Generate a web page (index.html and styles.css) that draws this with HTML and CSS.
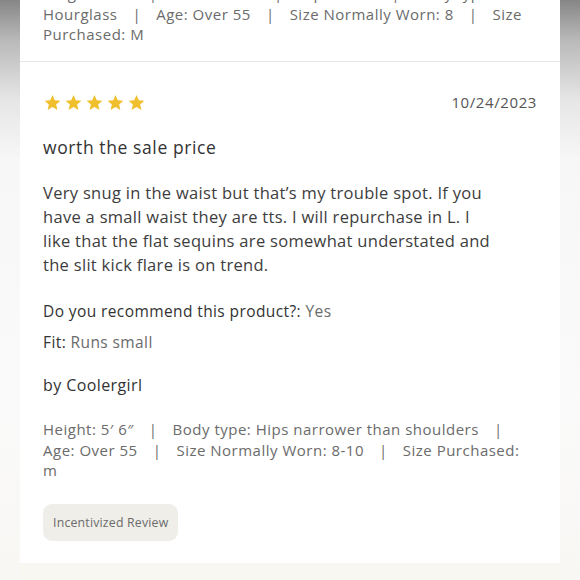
FILE: index.html
```html
<!DOCTYPE html>
<html>
<head>
<meta charset="utf-8">
<link rel="stylesheet" href="styles.css">
</head>
<body>
<div class="page">
  <div class="card">
    <div class="prev">
      <p class="meta meta-prev">Height: 5′ 5″<span class="sep">|</span>Waist: 30 in<span class="sep">|</span>Hips: 40 in<span class="sep">|</span>Body type:<br>Hourglass<span class="sep">|</span>Age: Over 55<span class="sep">|</span>Size Normally Worn: 8<span class="sep">|</span>Size<br>Purchased: M</p>
    </div>
    <div class="review">
      <div class="head">
        <div class="stars">
          <svg viewBox="0 0 24 24" class="star"><path d="M12 2.5l2.9 6.6 7.1.6-5.4 4.7 1.6 7-6.2-3.7-6.2 3.7 1.6-7L2 9.7l7.1-.6z"/></svg>
          <svg viewBox="0 0 24 24" class="star"><path d="M12 2.5l2.9 6.6 7.1.6-5.4 4.7 1.6 7-6.2-3.7-6.2 3.7 1.6-7L2 9.7l7.1-.6z"/></svg>
          <svg viewBox="0 0 24 24" class="star"><path d="M12 2.5l2.9 6.6 7.1.6-5.4 4.7 1.6 7-6.2-3.7-6.2 3.7 1.6-7L2 9.7l7.1-.6z"/></svg>
          <svg viewBox="0 0 24 24" class="star"><path d="M12 2.5l2.9 6.6 7.1.6-5.4 4.7 1.6 7-6.2-3.7-6.2 3.7 1.6-7L2 9.7l7.1-.6z"/></svg>
          <svg viewBox="0 0 24 24" class="star"><path d="M12 2.5l2.9 6.6 7.1.6-5.4 4.7 1.6 7-6.2-3.7-6.2 3.7 1.6-7L2 9.7l7.1-.6z"/></svg>
        </div>
        <div class="date">10/24/2023</div>
      </div>
      <h3 class="title">worth the sale price</h3>
      <p class="body">Very snug in the waist but that’s my trouble spot. If you<br>have a small waist they are tts. I will repurchase in L. I<br>like that the flat sequins are somewhat understated and<br>the slit kick flare is on trend.</p>
      <p class="qa qa-first"><span class="label">Do you recommend this product?:</span> <span class="value">Yes</span></p>
      <p class="qa qa-second"><span class="label">Fit:</span> <span class="value">Runs small</span></p>
      <p class="author">by Coolergirl</p>
      <p class="meta">Height: 5′ 6″<span class="sep">|</span>Body type: Hips narrower than shoulders<span class="sep">|</span><br>Age: Over 55<span class="sep">|</span>Size Normally Worn: 8-10<span class="sep">|</span>Size Purchased:<br>m</p>
      <div class="badge">Incentivized Review</div>
    </div>
  </div>
  <div class="footer"></div>
</div>
</body>
</html>
```

FILE: styles.css
```css
html, body {
  margin: 0;
  padding: 0;
}
body {
  width: 580px;
  height: 580px;
  overflow: hidden;
  background: linear-gradient(to bottom, #868686 0px, #b9b9b9 40px, #e6e6e6 100px, #f7f7f7 160px, #fafafa 400px, #f8f7f4 580px);
  font-family: "Open Sans", "Lato", sans-serif;
  color: #3a3a3a;
}
.page {
  padding: 0 20px;
}
.card {
  background: #ffffff;
}
p, h3 {
  margin: 0;
}
.prev {
  padding: 0 23px 16px;
  border-bottom: 1px solid #e6e6e6;
  height: 45px;
  overflow: hidden;
}
.meta {
  font-size: 15px;
  line-height: 20.5px;
  color: #6b6b6b;
  letter-spacing: 0.5px;
  white-space: nowrap;
}
.meta-prev {
  margin-top: -17px;
}
.sep {
  margin: 0 15px;
}
.review {
  padding: 29px 23px 22px;
}
.head {
  display: flex;
  justify-content: space-between;
  align-items: center;
  height: 22px;
}
.stars {
  display: flex;
  gap: 2px;
}
.star {
  width: 19px;
  height: 19px;
  fill: #f0bf2e;
}
.date {
  font-size: 15px;
  color: #555;
  letter-spacing: 0.6px;
}
.title {
  margin-top: 22px;
  font-size: 17.5px;
  line-height: 24px;
  font-weight: 400;
  color: #333;
  letter-spacing: 0.6px;
}
.body {
  margin-top: 22px;
  font-size: 16.5px;
  line-height: 24px;
  color: #3d3d3d;
  letter-spacing: 0.3px;
  white-space: nowrap;
}
.qa {
  font-size: 15.5px;
  line-height: 22px;
  letter-spacing: 0.4px;
}
.qa-first {
  margin-top: 23px;
}
.qa-second {
  margin-top: 9px;
}
.label {
  color: #333;
}
.value {
  color: #6b6b6b;
}
.author {
  margin-top: 21px;
  font-size: 16px;
  line-height: 22px;
  color: #333;
  letter-spacing: 0.4px;
}
.review .meta {
  margin-top: 23px;
}
.badge {
  display: inline-block;
  margin-top: 23px;
  background: #efeee9;
  border-radius: 9px;
  padding: 0 10px;
  height: 37px;
  line-height: 37px;
  font-size: 12.3px;
  color: #6b6b6b;
  letter-spacing: 0.2px;
}
.footer {
  height: 20px;
  background: #f8f7f2;
}
```
